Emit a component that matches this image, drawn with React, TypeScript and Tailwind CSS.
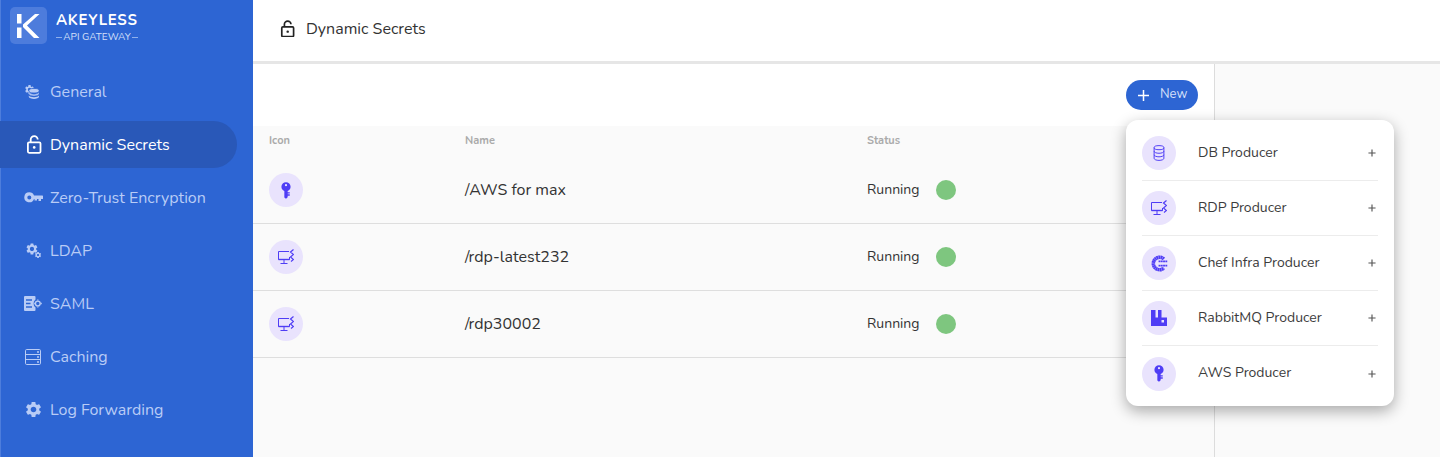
import React from "react";

const F = { fontFamily: '"Nunito", Lato, "Open Sans", sans-serif' };

const P = "#4f3df5";
const GEAR =
  "M19.14 12.94c.04-.3.06-.61.06-.94 0-.32-.02-.64-.07-.94l2.03-1.58c.18-.14.23-.41.12-.61l-1.92-3.32c-.12-.22-.37-.29-.59-.22l-2.39.96c-.5-.38-1.03-.7-1.62-.94l-.36-2.54c-.04-.24-.24-.41-.48-.41h-3.84c-.24 0-.43.17-.47.41l-.36 2.54c-.59.24-1.13.57-1.62.94l-2.39-.96c-.22-.08-.47 0-.59.22L2.74 8.87c-.12.21-.08.47.12.61l2.03 1.58c-.05.3-.09.63-.09.94s.02.64.07.94l-2.03 1.58c-.18.14-.23.41-.12.61l1.92 3.32c.12.22.37.29.59.22l2.39-.96c.5.38 1.03.7 1.62.94l.36 2.54c.05.24.24.41.48.41h3.84c.24 0 .44-.17.47-.41l.36-2.54c.59-.24 1.13-.56 1.62-.94l2.39.96c.22.08.47 0 .59-.22l1.92-3.32c.12-.22.07-.47-.12-.61l-2.01-1.58zM12 15.6c-1.98 0-3.6-1.62-3.6-3.6s1.62-3.6 3.6-3.6 3.6 1.62 3.6 3.6-1.62 3.6-3.6 3.6z";

function KeyV() {
  return (
    <svg width="10" height="17" viewBox="0 0 12 20" fill={P}>
      <path fillRule="evenodd" d="M6 0a5.500 5.500 0 0 1 5.500 5.500A5.500 5.500 0 0 1 8 10.600V12h2.500v1.600H8v1h2.500v1.600H8V18l-2 2-2-1.500v-7.900A5.500 5.500 0 0 1 .5 5.500 5.500 5.500 0 0 1 6 0Zm0 2.300a1.300 1.300 0 1 0 0 2.600 1.300 1.300 0 0 0 0-2.600Z" />
    </svg>
  );
}
function Rdp() {
  return (
    <svg width="16" height="16" viewBox="0 0 16 16" fill="none" stroke={P} strokeWidth="1">
      <path d="M11 2.500H.5v8h11V8" />
      <path d="M.5 10.500h11" strokeWidth="1.400" />
      <path d="M6 10.500v3.500M2.500 14.500h7" />
      <path d="M15.500 .5 12.500 3l3 2.500-3 2.500 3 2.500-2.500 2" strokeWidth="1.200" />
    </svg>
  );
}
function Db() {
  return (
    <svg width="12" height="16" viewBox="0 0 13 18" fill="none" stroke={P} strokeWidth="1.100">
      <ellipse cx="6.500" cy="3" rx="5.500" ry="2.300" />
      <path d="M1 3v12c0 1.300 2.500 2.300 5.500 2.300S12 16.300 12 15V3" />
      <path d="M1 7c0 1.300 2.500 2.300 5.500 2.300S12 8.300 12 7M1 11c0 1.300 2.500 2.300 5.500 2.300S12 12.300 12 11" />
    </svg>
  );
}
function Chef() {
  return (
    <svg width="17" height="17" viewBox="0 0 18 18" fill="none">
      <path d="M13.600 4.200A6.600 6.600 0 1 0 13.600 13.800" stroke={P} strokeWidth="3.800" strokeDasharray="1.800 .3" />
      <path d="M8 6.800h9.500M8 11.200h9.500" stroke={P} strokeWidth="2" strokeDasharray="2 .4" />
      <path d="M6.500 9h6" stroke="#e9e3fd" strokeWidth="1.500" />
    </svg>
  );
}
function Rabbit() {
  return (
    <svg width="16" height="16" viewBox="0 0 16 16" fill={P}>
      <path fillRule="evenodd" d="M0 0h4.500v7.500H7V0h3.500v7.500H16V16H0Zm10.500 10v2.500H13V10Z" />
    </svg>
  );
}

function Badge({ children }: { children: React.ReactNode }) {
  return <div className="flex h-[34px] w-[34px] shrink-0 items-center justify-center rounded-full bg-[#e9e3fd]">{children}</div>;
}

function Lock({ color, size = 16 }: { color: string; size?: number }) {
  return (
    <svg width={size} height={size * 1.19} viewBox="0 0 16 19" fill="none" stroke={color} strokeWidth="1.800">
      <rect x="1.900" y="7.400" width="12.600" height="10.400" rx="1.200" />
      <path d="M4.700 7.200V4.600a3.500 3.500 0 0 1 7 0" />
      <circle cx="8.200" cy="12.400" r="1.300" fill={color} stroke="none" />
    </svg>
  );
}

const C = "#b9ccf6";
const BG = "#2d65d3";
const navIcons: Record<string, React.ReactNode> = {
  General: (
    <svg className="-ml-[5px]" width="15" height="15" viewBox="0 0 15 15" fill={C}>
      <g transform="scale(.46)"><path d={GEAR} /></g>
      <ellipse cx="10" cy="6.700" rx="5.200" ry="2.300" stroke={BG} strokeWidth=".8" />
      <path d="M4.800 8.300c.6 1.100 2.800 1.900 5.200 1.900s4.400-.8 5-1.900v1.700c-.3 1.100-2.500 2-5 2s-5-.9-5.200-2Z" stroke={BG} strokeWidth=".4" />
      <path d="M4.800 11.500c.6 1.100 2.800 1.700 5.200 1.700s4.400-.6 5-1.700v1.300c-.3 1.300-2.500 2.200-5 2.200s-5-.9-5.200-2.200Z" />
    </svg>
  ),
  "Dynamic Secrets": <Lock color="#ffffff" size={16} />,
  "Zero-Trust Encryption": (
    <svg width="19" height="11" viewBox="0 0 19 11" fill={C}>
      <path fillRule="evenodd" d="M5.300.3a5 5 0 0 1 4.700 3.200h8.500L19 4v3h-2v2h-2.500V7h-1.500v1.500h-2.500V7H10A5 5 0 1 1 5.300.3Zm0 3.200a2 2 0 1 0 0 4 2 2 0 0 0 0-4Z" />
    </svg>
  ),
  LDAP: (
    <svg width="17" height="17" viewBox="0 0 17 17" fill={C}>
      <g transform="scale(.58)"><path d={GEAR} /></g>
      <g transform="translate(9.200 9.200) scale(.32)"><path d={GEAR} /></g>
    </svg>
  ),
  SAML: (
    <svg className="-ml-[2px]" width="18" height="15" viewBox="0 0 18 15" fill="none">
      <path d="M1 0h9.500a1 1 0 0 1 1 1v2.500a5 5 0 0 0 0 8V14a1 1 0 0 1-1 1H1a1 1 0 0 1-1-1V1a1 1 0 0 1 1-1Z" fill={C} />
      <path d="M2 4h6M2 7.500h4.500M2 11h6" stroke={BG} strokeWidth="1.300" />
      <circle cx="13.800" cy="7.500" r="2.400" stroke={C} strokeWidth="1.400" />
      <path d="M13.800 3.600v1M13.800 10.400v1M9.800 7.500h1M16.800 7.500h1" stroke={C} strokeWidth="1.300" />
    </svg>
  ),
  Caching: (
    <svg className="-ml-[2px]" width="16" height="16" viewBox="0 0 16 16" fill="none" stroke={C} strokeWidth="1">
      <rect x=".5" y=".5" width="15" height="15" rx="1.200" />
      <path d="M.5 5.500h15M.5 10.500h15" />
      <path d="M12 3h2M12 8h2M12 13h2" strokeWidth="1.400" />
    </svg>
  ),
  "Log Forwarding": (
    <svg width="19" height="19" viewBox="0 0 24 24" fill={C}>
      <path d={GEAR} />
    </svg>
  ),
};

const nav = ["General", "Dynamic Secrets", "Zero-Trust Encryption", "LDAP", "SAML", "Caching", "Log Forwarding"];
const rows: [string, React.ReactNode][] = [
  ["/AWS for max", <KeyV />],
  ["/rdp-latest232", <Rdp />],
  ["/rdp30002", <Rdp />],
];
const producers: [string, React.ReactNode][] = [
  ["DB Producer", <Db />],
  ["RDP Producer", <Rdp />],
  ["Chef Infra Producer", <Chef />],
  ["RabbitMQ Producer", <Rabbit />],
  ["AWS Producer", <KeyV />],
];

export default function App() {
  return (
    <div style={F} className="flex h-[457px] w-[1440px] overflow-hidden bg-white">
      <aside className="w-[253px] shrink-0 border-l border-l-[#4d7ddc] bg-[#2d65d3]">
        <div className="flex h-[51px] items-start pl-[9px] pt-[7px]">
          <div className="flex h-[37px] w-[37px] items-center justify-center rounded-[5px] bg-[#4d7cdc]">
            <svg width="23" height="24" viewBox="0 0 23 24" fill="#fff">
              <path d="M0 0h4.500v9.500H0ZM0 13.500h4.500V24H0Z" />
              <path d="M18 0h4.500L10 11.500 22.500 24H17L6 13V10.500Z" />
            </svg>
          </div>
          <div className="ml-[9px] mt-[4px] w-[82px]">
            <div className="whitespace-nowrap text-[15px] font-bold leading-[18px] tracking-[0.7px] text-white">AKEYLESS</div>
            <div className="mt-[2px] flex items-center whitespace-nowrap text-[10px] leading-[12px] text-[#d5e0fa]">
              <span className="mr-px h-px flex-1 bg-[#8fb0ec]" />
              <span>API GATEWAY</span>
              <span className="ml-px h-px flex-1 bg-[#8fb0ec]" />
            </div>
          </div>
        </div>
        <nav className="flex flex-col gap-[6px] pt-[17px]">
          {nav.map((n) => {
            const on = n === "Dynamic Secrets";
            return (
              <div key={n} className={`-ml-px flex h-[47px] w-[237px] items-center rounded-r-full ${on ? "bg-[#2958b8] text-white" : "text-[#b9ccf6]"}`}>
                <div className="flex w-[50px] justify-center pl-[17px]">{navIcons[n]}</div>
                <span className="text-[16px]">{n}</span>
              </div>
            );
          })}
        </nav>
      </aside>
      <div className="flex min-w-0 flex-1 flex-col">
        <header className="flex h-[64px] shrink-0 items-center gap-[11px] border-b-[3px] border-b-[#e6e6e6] pb-[4px] pl-[27px] text-[16px] text-[#333]">
          <Lock color="#222222" size={15} />
          <span>Dynamic Secrets</span>
        </header>
        <div className="relative flex flex-1">
          <main className="flex w-[962px] flex-col border-r border-r-[#dcdcdc] bg-[#fafafa]">
            <div className="flex h-[62px] items-start justify-end bg-white pr-[16px] pt-[16px]">
              <button className="flex h-[30px] w-[72px] items-center gap-[10px] rounded-full bg-[#2d65d3] pl-[11px] text-[13px] text-[#d5e0fa]">
                <svg width="13" height="13" viewBox="0 0 13 13" stroke="#fff" strokeWidth="1.500"><path d="M6.500 1v11M1 6.500h11" /></svg>
                New
              </button>
            </div>
            <div className="flex h-[31px] items-center pl-[16px] text-[11px] font-bold text-[#aaa]">
              <span className="w-[196px]">Icon</span>
              <span className="w-[402px]">Name</span>
              <span>Status</span>
            </div>
            {rows.map(([name, icon]) => (
              <div key={name} className="flex h-[67px] items-center border-b border-b-[#dedede] pl-[16px] text-[#333]">
                <div className="w-[196px]"><Badge>{icon}</Badge></div>
                <span className="w-[402px] pb-px text-[16px]">{name}</span>
                <span className="w-[69px] pb-[2px] text-[14px]">Running</span>
                <span className="h-[20px] w-[20px] rounded-full bg-[#7ec67f]" />
              </div>
            ))}
          </main>
          <div className="flex-1 bg-[#fafafa]" />
          <div className="absolute left-[873px] top-[56px] w-[268px] rounded-[12px] bg-white px-[16px] pb-[5px] pt-[6px] shadow-[0_5px_15px_rgba(0,0,0,0.33)]">
            {producers.map(([name, icon], i) => (
              <div key={name} className={`flex h-[55px] items-center ${i < 4 ? "border-b border-b-[#ececec]" : ""}`}>
                <Badge>{icon}</Badge>
                <span className="ml-[22px] flex-1 pb-[2px] text-[14px] text-[#3c3c3c]">{name}</span>
                <svg className="mr-[2px]" width="8" height="8" viewBox="0 0 9 9" stroke="#555" strokeWidth="1.300"><path d="M4.500 .5v8M.5 4.500h8" /></svg>
              </div>
            ))}
          </div>
        </div>
      </div>
    </div>
  );
}
